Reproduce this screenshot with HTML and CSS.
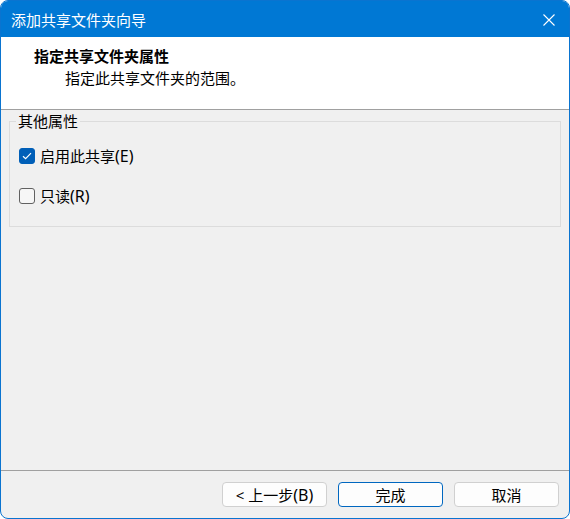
FILE: index.html
```html
<!DOCTYPE html>
<html lang="zh-CN">
<head>
<meta charset="utf-8">
<title>添加共享文件夹向导</title>
<link rel="stylesheet" href="styles.css">
</head>
<body>
<div class="window">
  <div class="titlebar">
    <span class="title">添加共享文件夹向导</span>
    <span class="close" aria-label="关闭">
      <svg width="12" height="12" viewBox="0 0 12 12"><path d="M0.5 0.5 L11.5 11.5 M11.5 0.5 L0.5 11.5" stroke="#fff" stroke-width="1.1" fill="none"/></svg>
    </span>
  </div>
  <div class="header">
    <div class="header-title">指定共享文件夹属性</div>
    <div class="header-sub">指定此共享文件夹的范围。</div>
  </div>
  <div class="content">
    <fieldset class="group">
      <legend class="group-label">其他属性</legend>
      <div class="row">
        <span class="check checked">
          <svg width="10" height="8" viewBox="0 0 10 8"><path d="M1 4.2 L3.6 6.6 L9 1.2" stroke="#fff" stroke-width="1.2" fill="none"/></svg>
        </span>
        <span class="label">启用此共享<span class="latin">(E)</span></span>
      </div>
      <div class="row">
        <span class="check"></span>
        <span class="label">只读<span class="latin">(R)</span></span>
      </div>
    </fieldset>
  </div>
  <div class="footer">
    <button class="btn">&lt; 上一步<span class="latin">(B)</span></button>
    <button class="btn default">完成</button>
    <button class="btn">取消</button>
  </div>
</div>
</body>
</html>
```
FILE: styles.css
```css
html, body {
  margin: 0;
  padding: 0;
  background: #ffffff;
}
body {
  font-family: "Noto Sans", "Noto Sans CJK SC", sans-serif;
  font-size: 15px;
  color: #000;
}
.window {
  box-sizing: border-box;
  width: 570px;
  height: 519px;
  border: 1px solid #0a74d0;
  border-radius: 8px;
  overflow: hidden;
  display: flex;
  flex-direction: column;
  background: #f0f0f0;
}
.titlebar {
  height: 36px;
  flex: none;
  background: #0078d4;
  color: #fff;
  display: flex;
  align-items: center;
  justify-content: space-between;
  padding: 0 14px 0 10px;
}
.title {
  font-size: 15px;
  line-height: 20px;
  margin-top: 1px;
}
.close {
  display: flex;
  width: 12px;
  height: 12px;
  margin-top: 2px;
}
.header {
  flex: none;
  background: #fff;
  border-bottom: 1px solid #a0a0a0;
  box-sizing: border-box;
  height: 73px;
  padding: 9px 0 0 33px;
}
.header-title {
  font-weight: bold;
  line-height: 20px;
}
.header-sub {
  line-height: 20px;
  margin-top: 2px;
  padding-left: 31px;
}
.content {
  flex: 1;
  padding: 1px 8px 0 8px;
}
.group {
  margin: 0;
  padding: 15px 0 20px 0;
  border: 1px solid #dcdcdc;
  min-width: 0;
}
.group-label {
  margin-left: 6px;
  padding: 0 2px;
  line-height: 20px;
}
.row {
  display: flex;
  align-items: center;
  height: 20px;
  margin-left: 9px;
}
.row + .row {
  margin-top: 20px;
}
.check {
  box-sizing: border-box;
  width: 16px;
  height: 16px;
  border: 1px solid #616161;
  border-radius: 3px;
  background: #f6f6f6;
  display: flex;
  align-items: center;
  justify-content: center;
  margin-right: 5px;
}
.check.checked {
  background: #005fb8;
  border-color: #005fb8;
}
.label {
  line-height: 20px;
}
.latin {
  font-size: 16px;
}
.footer {
  flex: none;
  height: 48px;
  box-sizing: border-box;
  border-top: 1px solid #a0a0a0;
  display: flex;
  justify-content: flex-end;
  gap: 11px;
  padding: 11px 10px 0 0;
}
.btn {
  box-sizing: border-box;
  width: 105px;
  height: 25px;
  background: #fdfdfd;
  border: 1px solid #d0d0d0;
  border-radius: 4px;
  font-family: "Noto Sans", "Noto Sans CJK SC", sans-serif;
  font-size: 15px;
  color: #000;
  padding: 0;
  line-height: 20px;
}
.btn.default {
  border-color: #0067c0;
}
```
